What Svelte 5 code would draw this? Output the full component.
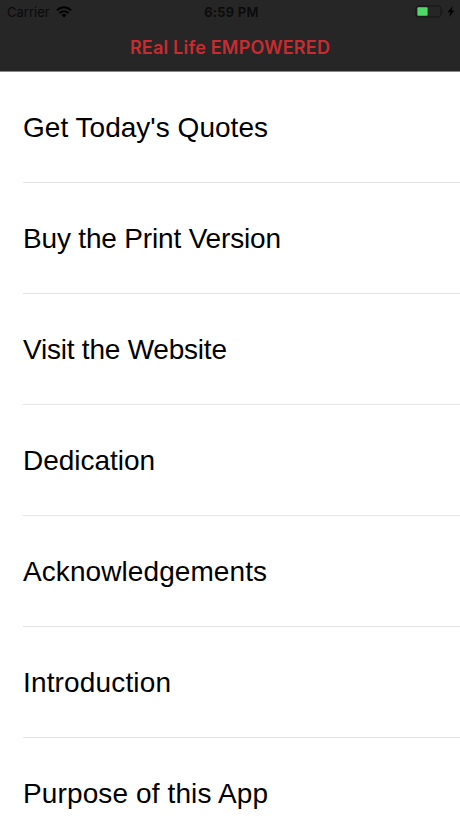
<script>
    const items = [
        { label: "Get Today's Quotes", width: 245 },
        { label: 'Buy the Print Version', width: 258 },
        { label: 'Visit the Website', width: 204 },
        { label: 'Dedication', width: 132 },
        { label: 'Acknowledgements', width: 244 },
        { label: 'Introduction', width: 148 },
        { label: 'Purpose of this App', width: 245 }
    ];
</script>

<div class="screen">
    <header>
        <div class="status">
            <div class="carrier">
                <span>Carrier</span>
                <svg class="wifi" width="16" height="12" viewBox="0 0 16 12">
                    <path d="M1 4.2C5 .4 11 .4 15 4.2M3.5 7C6 4.6 10 4.6 12.5 7" />
                    <path class="dot" d="M8 11.5L5.4 8.8Q8 6.8 10.6 8.8Z" />
                </svg>
            </div>
            <div class="time">6:59 PM</div>
            <div class="power">
                <svg width="45" height="14" viewBox="0 0 45 14">
                    <rect class="case" x="0.9" y="1" width="25" height="11" rx="2.5" />
                    <path class="cap" d="M27 4.5q2 2 0 4z" />
                    <rect class="level" x="2.4" y="2.3" width="10.2" height="8.4" rx="1" />
                    <path class="bolt" d="M37.5 1.2L32.5 7.2h3l-1.4 4.8 5.4-6.6h-3z" />
                </svg>
            </div>
        </div>
        <h1>REal Life EMPOWERED</h1>
    </header>
    <ul>
        {#each items as item}
            <li>
                <svg class="label" width="300" height="40">
                    <text x="0" y="30" textLength={item.width}>{item.label}</text>
                </svg>
            </li>
        {/each}
    </ul>
</div>

<style>
    :global(body) {
        background: #fff;
        font-family: 'Liberation Sans', Arial, sans-serif;
    }

    .screen {
        height: 818px;
        overflow: hidden;
    }

    header {
        background: #262626;
        border-bottom: 1px solid #888;
        box-sizing: border-box;
        height: 72px;
    }

    .status {
        align-items: center;
        color: #0a0a0a;
        display: grid;
        font: 13px Inter, sans-serif;
        grid-template-columns: 1fr auto 1fr;
        height: 24px;
    }

    .carrier {
        align-items: center;
        display: flex;
        gap: 6px;
        padding-left: 7px;
    }

    .wifi path {
        fill: none;
        stroke: #000;
        stroke-width: 2;
    }

    .wifi .dot {
        fill: #000;
        stroke: none;
    }

    .time {
        font-weight: 600;
        letter-spacing: 0.3px;
        padding-left: 3px;
    }

    .power {
        display: flex;
        justify-content: flex-end;
    }

    .case {
        fill: none;
        stroke: #151515;
    }

    .cap {
        fill: #151515;
    }

    .level {
        fill: #50d968;
    }

    h1 {
        color: #ca2b2f;
        font: 600 18px/46px Inter, sans-serif;
        letter-spacing: 0.2px;
        margin: 0;
        padding-top: 1px;
        text-align: center;
    }

    ul {
        list-style: none;
        margin: 0;
        padding: 0 0 0 23px;
    }

    li {
        align-items: center;
        border-bottom: 1px solid #e3e3e3;
        display: flex;
        height: 110px;
    }

    .label {
        font-size: 28px;
        overflow: visible;
    }
</style>
